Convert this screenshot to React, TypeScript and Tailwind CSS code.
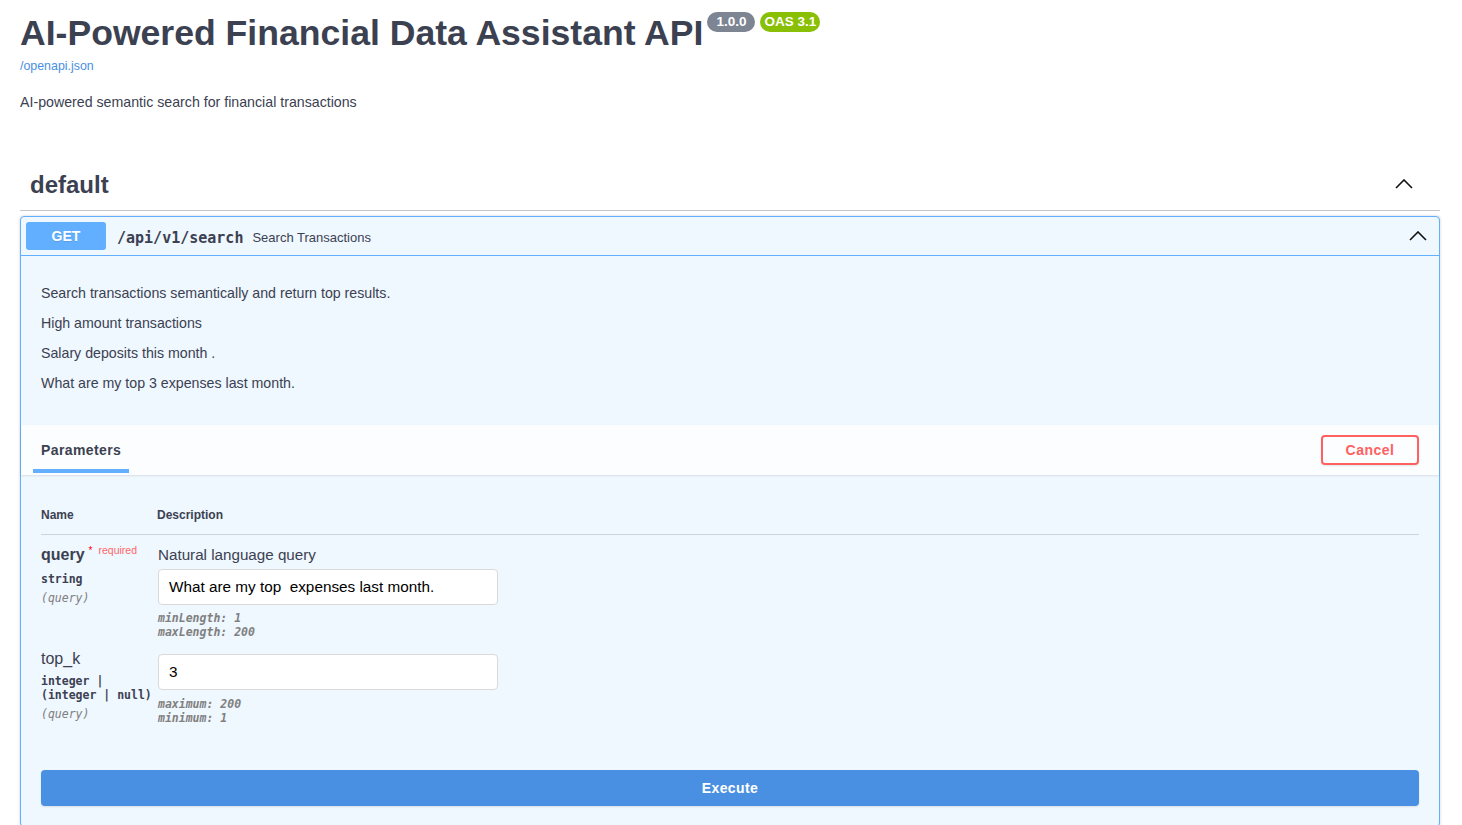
import React from "react";

const SANS = "font-['Liberation_Sans',Arial,sans-serif]";
const MONO = "font-['DejaVu_Sans_Mono','Liberation_Mono',monospace]";

function Chevron() {
  return (
    <svg width="18" height="10" viewBox="0 0 18 10" fill="none">
      <polyline points="1,9 9,1 17,9" stroke="#111" strokeWidth="1.6" strokeLinejoin="miter" />
    </svg>
  );
}

export default function App() {
  return (
    <div className={`${SANS} bg-white text-[#3b4151] min-h-[825px]`}>
      <div className="pl-5 pr-[22px] pt-[13px]">
        {/* Info */}
        <div className="flex items-start">
          <h2 className="text-[35.6px] leading-[41px] font-bold text-[#3b4151] m-0">
            AI-Powered Financial Data Assistant API
          </h2>
          <div className="flex gap-[5px] ml-[4px] -mt-[1px]">
            <span className="h-[20px] px-[9px] rounded-full bg-[#7d8492] text-white text-[13.5px] font-bold leading-[20px]">
              1.0.0
            </span>
            <span className="h-[20px] px-[4px] rounded-full bg-[#89bf04] text-white text-[13.5px] font-bold leading-[20px]">
              OAS 3.1
            </span>
          </div>
        </div>
        <div className="mt-[5px] text-[12.4px] leading-[14px] text-[#4990e2]">/openapi.json</div>
        <p className="mt-[21px] text-[14.2px] leading-[16px]">AI-powered semantic search for financial transactions</p>

        {/* Tag */}
        <div className="mt-[52px] flex items-center justify-between pl-[10px] pr-[27px] pt-[9px] pb-[11px] border-b border-[#c4c6cb]">
          <h3 className="text-[24px] leading-[28px] font-bold">default</h3>
          <div className="-mt-[3px]">
            <Chevron />
          </div>
        </div>

        {/* Operation block */}
        <div className="mt-[5px] border border-[#61affe] rounded-[4px] bg-[#eff7ff] shadow-[0_0_3px_rgba(0,0,0,0.19)]">
          {/* Summary */}
          <div className="flex items-center p-[5px] pr-[12px] border-b border-[#61affe]">
            <div className="w-[80px] h-[28px] rounded-[3px] bg-[#61affe] text-white text-[14px] font-bold flex items-center justify-center [text-shadow:0_1px_0_rgba(0,0,0,0.1)]">
              GET
            </div>
            <span className={`${MONO} font-bold text-[15px] pl-[11px] pr-[9px] pt-[4px] text-[#3b4151]`}>/api/v1/search</span>
            <span className="text-[13px] pt-[3px] text-[#3b4151]">Search Transactions</span>
            <div className="ml-auto">
              <Chevron />
            </div>
          </div>

          {/* Description */}
          <div className="px-5 pt-[27px] pb-[31px] text-[14.2px]">
            <p className="leading-[21px] mb-[9px]">Search transactions semantically and return top results.</p>
            <p className="leading-[21px] mb-[9px]">High amount transactions</p>
            <p className="leading-[21px] mb-[9px]">Salary deposits this month .</p>
            <p className="leading-[21px]">What are my top 3 expenses last month.</p>
          </div>

          {/* Section header */}
          <div className="h-[50px] flex items-center justify-between pl-[12px] pr-[20px] bg-[#fcfdff] shadow-[0_1px_2px_rgba(0,0,0,0.1)]">
            <div className="relative self-stretch flex items-center px-2">
              <span className="text-[14px] font-bold tracking-[0.4px]">Parameters</span>
              <span className="absolute left-0 right-0 bottom-[2px] h-[4px] bg-[#61affe]" />
            </div>
            <button className="w-[98px] h-[30px] border-2 border-[#ff6060] rounded-[4px] text-[#ff6060] text-[14px] font-bold tracking-[0.5px] bg-transparent shadow-[0_1px_2px_rgba(0,0,0,0.1)]">
              Cancel
            </button>
          </div>

          {/* Parameters table */}
          <div className="px-5 pt-[21px]">
            <div className="flex py-[12px] border-b border-[#cbd3dc] text-[12px] leading-[14px] font-bold">
              <div className="w-[116px]">Name</div>
              <div>Description</div>
            </div>

            {/* query row */}
            <div className="flex pt-[10px]">
              <div className="w-[117px]">
                <div className="leading-[20px] text-[16px] font-bold whitespace-nowrap">
                  query
                  <span className="relative -top-[6px] text-[10px] font-normal text-[#ff0000] ml-[4px]">*</span>
                  <span className="relative -top-[6px] text-[10.5px] font-normal text-[#ff6666] ml-[6px]">required</span>
                </div>
                <div className={`${MONO} text-[11.5px] leading-[14px] font-bold py-[5px]`}>string</div>
                <div className={`${MONO} text-[11.5px] leading-[14px] italic text-[#808080]`}>(query)</div>
              </div>
              <div>
                <div className="text-[15.2px] leading-[20px] text-[#3b4151]">Natural language query</div>
                <div className="mt-[4px] w-[340px] h-[36px] bg-white border border-[#d9d9d9] rounded-[4px] flex items-center px-[10px] text-[15.3px] text-black whitespace-pre">
                  What are my top  expenses last month.
                </div>
                <div className={`${MONO} mt-[6px] text-[11.5px] leading-[14px] italic font-semibold text-[#808080]`}>
                  <div>minLength: 1</div>
                  <div>maxLength: 200</div>
                </div>
              </div>
            </div>

            {/* top_k row */}
            <div className="flex pt-[10px]">
              <div className="w-[117px]">
                <div className="leading-[20px] text-[16px]">top_k</div>
                <div className={`${MONO} text-[11.5px] leading-[14px] font-bold py-[5px] whitespace-nowrap`}>
                  <div>integer |</div>
                  <div>(integer | null)</div>
                </div>
                <div className={`${MONO} text-[11.5px] leading-[14px] italic text-[#808080]`}>(query)</div>
              </div>
              <div className="pt-[5px]">
                <div className="w-[340px] h-[36px] bg-white border border-[#d9d9d9] rounded-[4px] flex items-center px-[10px] text-[15.3px] text-black">
                  3
                </div>
                <div className={`${MONO} mt-[7px] text-[11.5px] leading-[14px] italic font-semibold text-[#808080]`}>
                  <div>maximum: 200</div>
                  <div>minimum: 1</div>
                </div>
              </div>
            </div>

            {/* Execute */}
            <div className="pt-[45px] pb-5">
              <button className="w-full h-[36px] rounded-[4px] bg-[#4990e2] text-white text-[14px] font-bold tracking-[0.4px] shadow-[0_1px_2px_rgba(0,0,0,0.1)]">
                Execute
              </button>
            </div>
          </div>
        </div>
      </div>
    </div>
  );
}
